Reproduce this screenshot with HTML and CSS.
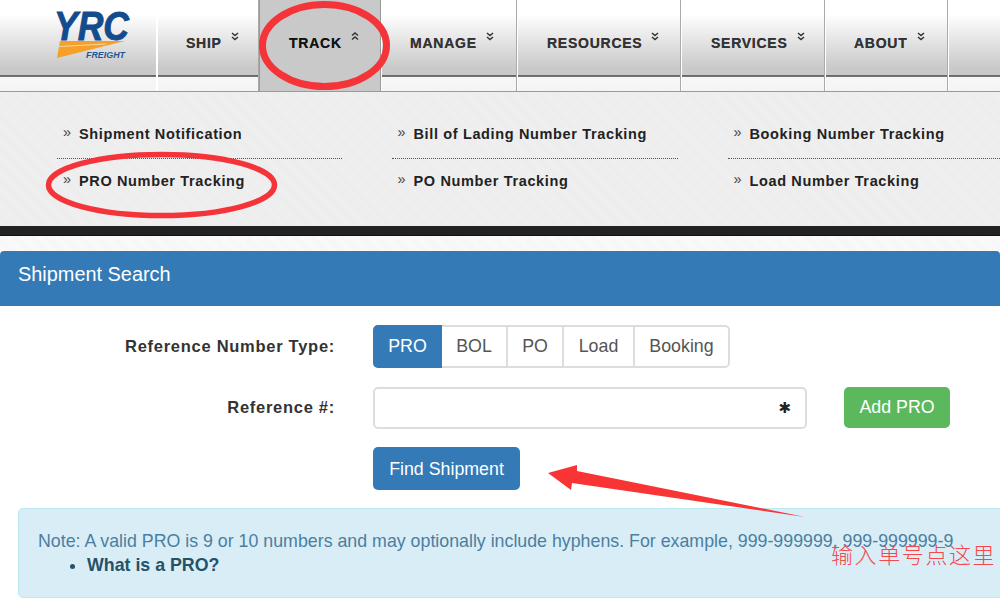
FILE: index.html
```html
<!DOCTYPE html>
<html lang="en">
<head>
<meta charset="utf-8">
<title>YRC Freight - Shipment Search</title>
<link rel="stylesheet" href="styles.css">
</head>
<body>
<div class="page">
  <nav class="nav">
    <a class="logo">
      <svg width="156" height="75" viewBox="0 0 156 75">
        <text x="54" y="39.5" class="logo-yrc" textLength="75" lengthAdjust="spacingAndGlyphs">YRC</text>
        <polygon points="60,41 125,41 57,58" fill="#f6a02c"/>
        <line x1="59" y1="46.5" x2="106" y2="44" stroke="#f4e2c0" stroke-width="0.8"/>
        <text x="86" y="58" class="logo-freight" textLength="39" lengthAdjust="spacingAndGlyphs">FREIGHT</text>
      </svg>
    </a>
    <a class="item w-ship"><span>SHIP</span><svg class="chev" width="8" height="9" viewBox="0 0 8 9"><path d="M1 1l3 2.5L7 1M1 5l3 2.5L7 5"/></svg></a>
    <a class="item active w-track"><span>TRACK</span><svg class="chev" width="8" height="9" viewBox="0 0 8 9"><path d="M1 3.5L4 1l3 2.5M1 7.5L4 5l3 2.5"/></svg></a>
    <a class="item w-manage"><span>MANAGE</span><svg class="chev" width="8" height="9" viewBox="0 0 8 9"><path d="M1 1l3 2.5L7 1M1 5l3 2.5L7 5"/></svg></a>
    <a class="item w-resources"><span>RESOURCES</span><svg class="chev" width="8" height="9" viewBox="0 0 8 9"><path d="M1 1l3 2.5L7 1M1 5l3 2.5L7 5"/></svg></a>
    <a class="item w-services"><span>SERVICES</span><svg class="chev" width="8" height="9" viewBox="0 0 8 9"><path d="M1 1l3 2.5L7 1M1 5l3 2.5L7 5"/></svg></a>
    <a class="item w-about"><span>ABOUT</span><svg class="chev" width="8" height="9" viewBox="0 0 8 9"><path d="M1 1l3 2.5L7 1M1 5l3 2.5L7 5"/></svg></a>
    <div class="item rest"></div>
  </nav>

  <div class="submenu">
    <a class="sub first"><i>»</i>Shipment Notification</a>
    <a class="sub first"><i>»</i>Bill of Lading Number Tracking</a>
    <a class="sub first"><i>»</i>Booking Number Tracking</a>
    <a class="sub"><i>»</i>PRO Number Tracking</a>
    <a class="sub"><i>»</i>PO Number Tracking</a>
    <a class="sub"><i>»</i>Load Number Tracking</a>
  </div>
  <div class="blackbar"></div>
  <div class="strip"></div>

  <section class="panel-head">Shipment Search</section>

  <form class="form">
    <label class="lbl">Reference Number Type:</label>
    <div class="seg">
      <span class="seg-btn on w-pro">PRO</span>
      <span class="seg-btn w-bol">BOL</span>
      <span class="seg-btn w-po">PO</span>
      <span class="seg-btn w-load">Load</span>
      <span class="seg-btn w-booking">Booking</span>
    </div>
    <label class="lbl">Reference #:</label>
    <div class="ref-row">
      <div class="input"><span class="req">✱</span></div>
      <span class="btn btn-green">Add PRO</span>
    </div>
    <span></span>
    <div class="find-cell"><span class="btn btn-blue">Find Shipment</span></div>
  </form>

  <div class="note">
    <p>Note: A valid PRO is 9 or 10 numbers and may optionally include hyphens. For example, 999-999999, 999-999999-9</p>
    <ul><li>What is a PRO?</li></ul>
  </div>

  <svg class="marks" width="1000" height="600" viewBox="0 0 1000 600">
    <ellipse cx="324.5" cy="45.5" rx="62" ry="41"/>
    <ellipse cx="161.5" cy="185" rx="113" ry="30.5" class="thin"/>
    <polygon class="arrow" points="548,473 577,465 577,471 805,517 572,483 571,490"/>
  </svg>
  <div class="callout">输入单号点这里</div>
</div>
</body>
</html>
```
FILE: styles.css
```css
* { box-sizing: border-box; }
html, body { margin: 0; padding: 0; background: #fff; }
.page {
  position: relative;
  width: 1000px;
  height: 600px;
  overflow: hidden;
  font-family: "Liberation Sans", Arial, sans-serif;
  display: flex;
  flex-direction: column;
}

/* top nav */
.nav { display: flex; height: 92px; flex: none; border-bottom: 1px solid #999; }
.logo, .item {
  height: 91px;
  flex: none;
  background:
    linear-gradient(#fff 0, #fff 14px, #c9c9c9 68px, #c9c9c9 75px, #666 75px, #777 77px, #f7f7f7 77px, #f4f4f4 91px);
}
.logo { width: 157px; border-right: 1px solid #fff; }
.logo svg { display: block; }
.logo-yrc {
  font: italic bold 41px "Liberation Sans", Arial, sans-serif;
  fill: #124b8e;
  stroke: #124b8e;
  stroke-width: 0.9;
}
.logo-freight { font: italic bold 9px "Liberation Sans", Arial, sans-serif; fill: #1d5697; }
.item {
  display: flex;
  align-items: flex-start;
  padding-left: 28px;
  padding-top: 35px;
  border-right: 1px solid #aaa;
  border-left: 1px solid #fff;
  color: #333;
  font-size: 14px;
  line-height: 16px;
  font-weight: bold;
  letter-spacing: 0.75px;
  text-shadow: 0 0 0.4px #555;
}
.item span { display: block; }
.chev { margin-left: 9px; margin-top: -3px; fill: none; stroke: #333; stroke-width: 1.5; }
.w-ship { width: 102px; }
.w-track { width: 122px; }
.w-manage { width: 136px; }
.w-resources { width: 164px; padding-left: 29px; }
.w-services { width: 144px; padding-left: 29px; }
.w-about { width: 123px; }
.rest { flex: 1; border-right: 0; }
.item.active {
  background: #c9c9c9;
  color: #111;
  padding-left: 29px;
  border-left: 1px solid #999;
  border-right: 1px solid #999;
}

/* submenu */
.submenu {
  flex: none;
  height: 134px;
  background: repeating-linear-gradient(45deg, #f0f0f0 0 1px, #ececec 1px 2px);
  padding: 0 0 0 57px;
  display: grid;
  grid-template-columns: 284.5px 286px 1fr;
  grid-template-rows: 67px 44px;
  column-gap: 50px;
}
.sub {
  display: flex;
  align-items: center;
  color: #222;
  font-size: 14.5px;
  font-weight: bold;
  letter-spacing: 0.64px;
  line-height: 16px;
  padding-left: 6px;
}
.sub.first { border-bottom: 1px dotted #555; align-items: flex-start; padding-top: 34px; }
.sub i { font-style: normal; font-weight: normal; color: #444; width: 16px; flex: none; position: relative; top: -2px; }
.blackbar { flex: none; height: 10px; background: #222; border-bottom: 1px solid #111; }
.strip { flex: none; height: 15px; background: repeating-linear-gradient(45deg, #fbfbfb 0 1px, #f5f5f5 1px 2px); }

/* panel */
.panel-head {
  flex: none;
  height: 55px;
  background: #337ab7;
  color: #fff;
  font-size: 19.9px;
  line-height: 47px;
  padding-left: 18px;
  border-radius: 4px 4px 0 0;
}

.form {
  flex: none;
  display: grid;
  grid-template-columns: 335px 1fr;
  column-gap: 38px;
  row-gap: 18px;
  padding-top: 19px;
  align-items: center;
}
.lbl { text-align: right; font-size: 16.5px; font-weight: bold; color: #333; letter-spacing: 0.72px; margin-bottom: 2px; }
.seg {
  display: inline-flex;
  height: 43px;
  width: 357px;
  margin-bottom: 1px;
  border: 2px solid #ddd;
  border-radius: 5px;
}
.seg-btn {
  display: flex;
  align-items: center;
  justify-content: center;
  font-size: 17.8px;
  color: #555;
  border-right: 2px solid #ddd;
}
.seg-btn:last-child { border-right: 0; }
.seg-btn.on { background: #337ab7; color: #fff; margin: -2px 0 -2px -2px; border-radius: 5px 0 0 5px; border-right: 0; }
.w-pro { width: 69px; }
.w-bol { width: 66px; }
.w-po { width: 56px; }
.w-load { width: 71px; }
.w-booking { width: 93px; }
.ref-row { display: flex; align-items: flex-start; }
.input {
  width: 434px;
  height: 42px;
  border: 2px solid #ddd;
  border-radius: 5px;
  background: #fff;
  display: flex;
  align-items: center;
  justify-content: flex-end;
  padding-right: 14px;
}
.req { font-family: "DejaVu Sans", sans-serif; font-size: 15px; font-weight: bold; color: #222; }
.btn {
  display: inline-flex;
  align-items: center;
  justify-content: center;
  height: 43px;
  border-radius: 5px;
  color: #fff;
  font-size: 17.8px;
}
.btn-green { background: #5cb85c; width: 106px; margin-left: 37px; height: 41px; }
.btn-blue { background: #337ab7; width: 147px; padding-top: 1px; }
.find-cell { height: 43px; }

/* note */
.note {
  flex: none;
  margin: 18px 0 0 18px;
  width: 1000px;
  height: 90px;
  background: #d9edf7;
  border: 1px solid #bce8f1;
  border-radius: 5px;
  padding: 20px 0 0 19px;
  color: #4b7f9f;
  font-size: 17.8px;
  line-height: 24px;
}
.note p { margin: 0; white-space: nowrap; }
.note ul { margin: 0; padding: 0 0 0 49px; }
.note li { font-weight: bold; color: #245269; }

/* annotations drawn over the screenshot */
.marks { position: absolute; left: 0; top: 0; pointer-events: none; }
.marks ellipse { fill: none; stroke: #f43438; stroke-width: 7; }
.marks ellipse.thin { stroke-width: 5.5; }
.marks .arrow { fill: #f93434; }
.callout {
  position: absolute;
  left: 831px;
  top: 538px;
  white-space: nowrap;
  font-family: "Noto Sans CJK SC", sans-serif;
  font-weight: 300;
  font-size: 22px;
  line-height: 30px;
  letter-spacing: 1.6px;
  color: #f4484c;
}
```
